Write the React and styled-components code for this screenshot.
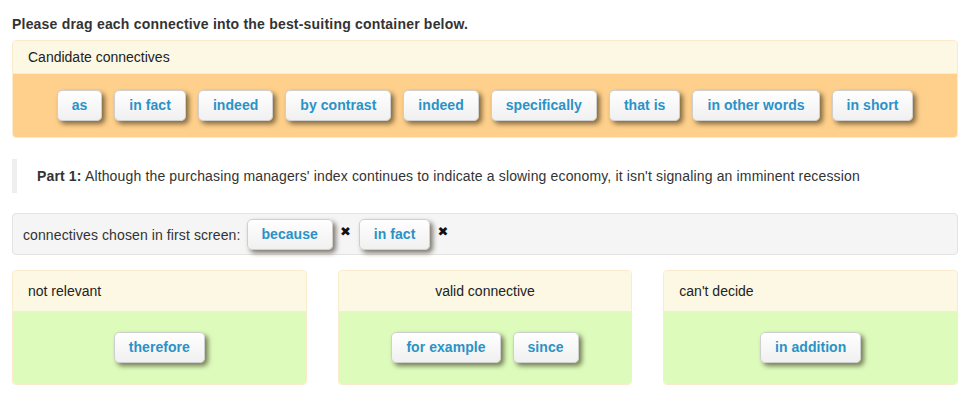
import React from "react";
import styled, { createGlobalStyle } from "styled-components";

const Global = createGlobalStyle`
  html, body { margin: 0; padding: 0; background: #fff; }
  body { font-family: "Liberation Sans", Arial, sans-serif; font-size: 14px; color: #333; }
`;

const Page = styled.div`
  padding: 15px 16px 20px 12px;
`;

const Title = styled.div`
  font-weight: bold;
  font-size: 14px;
  line-height: 18px;
  letter-spacing: 0.2px;
  color: #333;
  margin-bottom: 7px;
`;

const Panel = styled.div`
  border: 1px solid #faebcc;
  border-radius: 4px;
  overflow: hidden;
`;

const PanelHead = styled.div`
  background: #fcf8e3;
  border-bottom: 1px solid #faebcc;
  padding: ${(p) => p.$pad || "6px 15px"};
  line-height: 20px;
  color: #222;
  text-align: ${(p) => (p.$center ? "center" : "left")};
`;

const PanelBody = styled.div`
  background: ${(p) => p.$bg};
  padding: ${(p) => p.$pad};
  display: flex;
  flex-wrap: wrap;
  justify-content: center;
  gap: 12px;
`;

const Chip = styled.div`
  display: inline-block;
  box-sizing: border-box;
  padding: 5px 14px;
  line-height: 19px;
  font-size: 14px;
  font-weight: bold;
  letter-spacing: 0.05px;
  color: #2b92c7;
  background: linear-gradient(#ffffff, #f0f0f0);
  border: 1px solid #cfcfcf;
  border-radius: 5px;
  box-shadow: 3px 3px 5px rgba(30, 20, 0, 0.55);
  white-space: nowrap;
`;

const Quote = styled.div`
  margin: 21px 0 20px;
  border-left: 5px solid #eee;
  padding: 7px 20px;
  line-height: 20px;
  font-size: 14px;
  letter-spacing: 0.15px;
  color: #333;
`;

const Well = styled.div`
  background: #f5f5f5;
  border: 1px solid #e3e3e3;
  border-radius: 4px;
  padding: 5px 10px 4px;
  display: flex;
  align-items: center;
  margin-bottom: 15px;
`;

const WellLabel = styled.span`
  color: #333;
  letter-spacing: 0.1px;
  margin-right: 6px;
`;

const Remove = styled.span`
  font-family: "DejaVu Sans", sans-serif;
  font-size: 13px;
  color: #111;
  align-self: flex-start;
  margin: 6px 8px 0 7px;
  line-height: 14px;
`;

const Grid = styled.div`
  display: grid;
  grid-template-columns: repeat(3, 1fr);
  gap: 31px;
`;

const candidates = [
  "as",
  "in fact",
  "indeed",
  "by contrast",
  "indeed",
  "specifically",
  "that is",
  "in other words",
  "in short",
];

const bins = [
  { title: "not relevant", items: ["therefore"] },
  { title: "valid connective", items: ["for example", "since"], center: true },
  { title: "can't decide", items: ["in addition"] },
];

export default function App() {
  return (
    <Page>
      <Global />
      <Title>Please drag each connective into the best-suiting container below.</Title>
      <Panel>
        <PanelHead>Candidate connectives</PanelHead>
        <PanelBody $bg="#fed08b" $pad="16px 15px 16px">
          {candidates.map((c, i) => (
            <Chip key={i}>{c}</Chip>
          ))}
        </PanelBody>
      </Panel>
      <Quote>
        <b>Part 1:</b> Although the purchasing managers' index continues to indicate a slowing
        economy, it isn't signaling an imminent recession
      </Quote>
      <Well>
        <WellLabel>connectives chosen in first screen:</WellLabel>
        <Chip>because</Chip>
        <Remove>✖</Remove>
        <Chip>in fact</Chip>
        <Remove>✖</Remove>
      </Well>
      <Grid>
        {bins.map((b) => (
          <Panel key={b.title}>
            <PanelHead $pad="10px 15px" $center={b.center}>
              {b.title}
            </PanelHead>
            <PanelBody $bg="#ddfcbc" $pad="20px 15px 21px">
              {b.items.map((it) => (
                <Chip key={it}>{it}</Chip>
              ))}
            </PanelBody>
          </Panel>
        ))}
      </Grid>
    </Page>
  );
}
